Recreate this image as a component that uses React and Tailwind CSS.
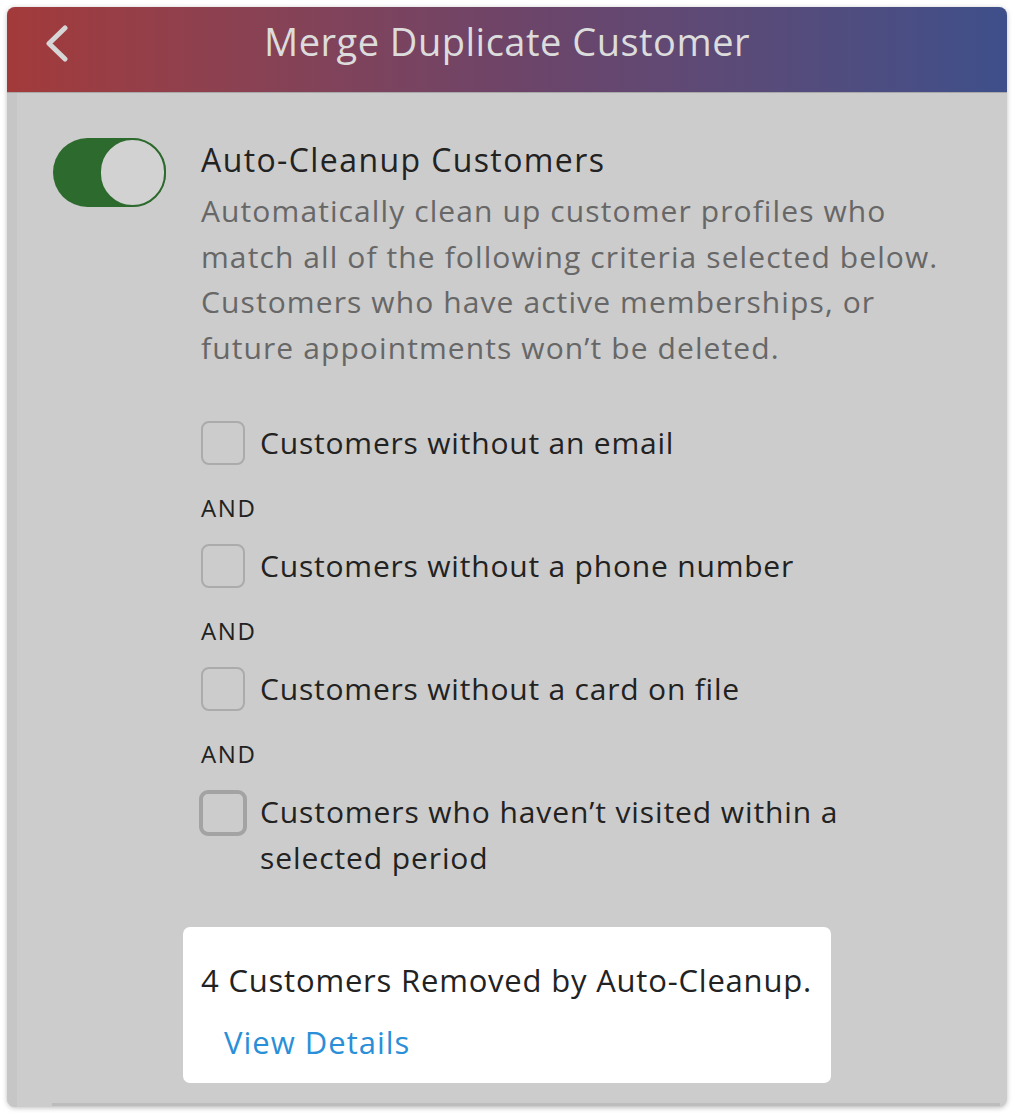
import React from "react";

const rows = [
  { label: "Customers without an email" },
  { label: "Customers without a phone number" },
  { label: "Customers without a card on file" },
];

const Checkbox = ({ focused }) => (
  <span
    className={
      focused
        ? "block w-[48px] h-[46px] shrink-0 rounded-[9px] border-[4px] border-[#a3a3a3] -ml-[2px] mr-[13px] mt-[1px]"
        : "block w-[44px] h-[44px] shrink-0 rounded-[8px] border-2 border-[#ababab] mr-[15px]"
    }
  />
);

const App = () => {
  return (
    <div className="min-h-screen bg-white pt-[7px] pl-[7px]" style={{ fontFamily: "'Open Sans', 'Noto Sans', sans-serif" }}>
      <div className="w-[1000px] h-[1100px] rounded-[8px] overflow-hidden shadow-[0_1px_5px_rgba(0,0,0,0.25)] bg-[#cccccc] flex flex-col">
        <header className="h-[86px] shrink-0 relative flex items-center justify-center bg-gradient-to-r from-[#a33a3a] via-[#6e4468] to-[#3e4f8a] border-b border-[#a8a8a8]">
          <svg className="absolute left-[36px] top-[18px]" width="34" height="38" viewBox="0 0 34 38">
            <path d="M22 3 L6 18.5 L22 34" fill="none" stroke="#d6d6d6" strokeWidth="5" strokeLinecap="round" strokeLinejoin="round" />
          </svg>
          <h1 className="text-[38px] leading-[46px] text-[#dcdcdc] -mt-[18px] tracking-[0.5px]">Merge Duplicate Customer</h1>
        </header>

        <div className="flex flex-1">
          <div className="w-[10px] shrink-0 bg-[#c6c6c6]" />
          <div className="flex-1 flex flex-col">
            <div className="flex pl-[36px] pt-[45px]">
              <div className="w-[113px] h-[69px] shrink-0 rounded-full bg-[#2d6a2d] flex justify-end">
                <span className="block w-[67px] h-[69px] rounded-full bg-[#d2d2d2] border-2 border-[#2d6a2d]" />
              </div>
              <div className="ml-[35px] -mt-[1px]">
                <h2 className="text-[32px] leading-[46px] text-[#222] tracking-[1.4px]">Auto-Cleanup Customers</h2>
                <p className="mt-[5px] text-[30px] leading-[45.5px] text-[#676767] tracking-[1.1px] whitespace-nowrap">
                  Automatically clean up customer profiles who
                  <br />
                  match all of the following criteria selected below.
                  <br />
                  Customers who have active memberships, or
                  <br />
                  future appointments won’t be deleted.
                </p>

                <div className="mt-[50px] flex flex-col">
                  {rows.map((r, i) => (
                    <React.Fragment key={i}>
                      <label className="flex items-center h-[46px]">
                        <Checkbox />
                        <span className="text-[30px] leading-[46px] text-[#222] tracking-[0.8px]">{r.label}</span>
                      </label>
                      <div className="mt-[27px] mb-[20px] text-[24px] leading-[30px] text-[#222] font-medium tracking-[1.6px]">AND</div>
                    </React.Fragment>
                  ))}
                  <label className="flex items-start">
                    <Checkbox focused />
                    <span className="text-[30px] leading-[46px] text-[#222] tracking-[0.9px] whitespace-nowrap">
                      Customers who haven’t visited within a
                      <br />
                      selected period
                    </span>
                  </label>
                </div>

                <div className="mt-[46px] -ml-[18px] w-[648px] h-[156px] bg-white rounded-[7px] pl-[18px] pt-[30px]">
                  <p className="text-[31px] leading-[46px] text-[#222] tracking-[0.8px] whitespace-nowrap">4 Customers Removed by Auto-Cleanup.</p>
                  <a href="#" className="block mt-[16px] ml-[23px] text-[31px] leading-[46px] text-[#2a8fd8] tracking-[1px]">View Details</a>
                </div>
              </div>
            </div>
            <div className="mt-[20px] ml-[35px] mr-[7px] h-[3px] bg-[#bcbcbc]" />
          </div>
        </div>
      </div>
    </div>
  );
};

export default App;
